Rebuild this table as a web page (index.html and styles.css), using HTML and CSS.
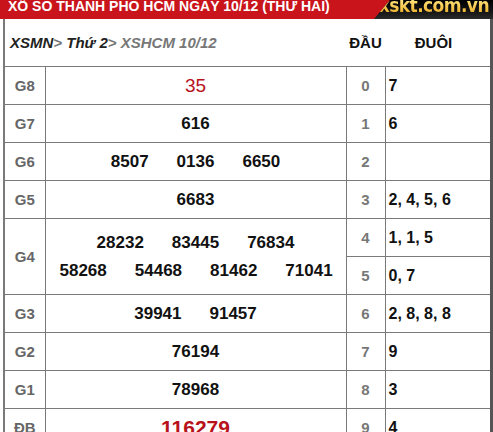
FILE: index.html
```html
<!DOCTYPE html>
<html lang="vi">
<head>
<meta charset="utf-8">
<title>XSHCM 10/12</title>
<link rel="stylesheet" href="styles.css">
</head>
<body>
<div class="topbar">
  <div class="title">XỔ SỐ THÀNH PHỐ HCM NGÀY 10/12 (THỨ HAI)</div>
  <div class="logo"><span class="logo-text">xskt.com.vn</span></div>
</div>
<div class="board">
  <table class="results">
    <colgroup>
      <col class="c-label"><col class="c-nums"><col class="c-head"><col class="c-tail">
    </colgroup>
    <thead>
      <tr>
        <th colspan="2" class="crumbs"><span class="dark">XSMN</span><span class="sep">&gt; </span><span class="dark">Thứ 2</span><span class="sep">&gt; XSHCM 10/12</span></th>
        <th class="h-head">ĐẦU</th>
        <th class="h-tail">ĐUÔI</th>
      </tr>
    </thead>
    <tbody>
      <tr><td class="label">G8</td><td class="nums"><span class="g8">35</span></td><td class="head">0</td><td class="tail">7</td></tr>
      <tr><td class="label">G7</td><td class="nums"><span class="n">616</span></td><td class="head">1</td><td class="tail">6</td></tr>
      <tr><td class="label">G6</td><td class="nums"><span class="n">8507</span><span class="n">0136</span><span class="n">6650</span></td><td class="head">2</td><td class="tail"></td></tr>
      <tr><td class="label">G5</td><td class="nums"><span class="n">6683</span></td><td class="head">3</td><td class="tail">2, 4, 5, 6</td></tr>
      <tr><td class="label" rowspan="2">G4</td><td class="nums multi" rowspan="2"><div><span class="n">28232</span><span class="n">83445</span><span class="n">76834</span></div><div><span class="n">58268</span><span class="n">54468</span><span class="n">81462</span><span class="n">71041</span></div></td><td class="head">4</td><td class="tail">1, 1, 5</td></tr>
      <tr><td class="head">5</td><td class="tail">0, 7</td></tr>
      <tr><td class="label">G3</td><td class="nums"><span class="n">39941</span><span class="n">91457</span></td><td class="head">6</td><td class="tail">2, 8, 8, 8</td></tr>
      <tr><td class="label">G2</td><td class="nums"><span class="n">76194</span></td><td class="head">7</td><td class="tail">9</td></tr>
      <tr><td class="label">G1</td><td class="nums"><span class="n">78968</span></td><td class="head">8</td><td class="tail">3</td></tr>
      <tr><td class="label">ĐB</td><td class="nums"><span class="db">116279</span></td><td class="head">9</td><td class="tail">4</td></tr>
    </tbody>
  </table>
</div>
</body>
</html>
```
FILE: styles.css
```css
html, body {
  margin: 0;
  padding: 0;
  background: #fff;
}
body {
  font-family: "Liberation Sans", Arial, sans-serif;
  width: 493px;
  overflow: hidden;
}
.topbar {
  height: 19px;
  background: #c9141c;
  display: flex;
  justify-content: space-between;
  overflow: hidden;
}
.title {
  color: #fff;
  font-weight: bold;
  font-size: 14px;
  line-height: 13px;
  padding-left: 8px;
  white-space: nowrap;
}
.logo {
  width: 125px;
  height: 19px;
  background: linear-gradient(180deg, #000 0%, #151515 60%, #2a2a2a 100%);
  clip-path: polygon(22px 0, 100% 0, 100% 100%, 6px 100%);
  display: flex;
  justify-content: flex-end;
  overflow: hidden;
}
.logo-text {
  font-family: "DejaVu Sans Condensed", "DejaVu Sans", sans-serif;
  font-stretch: condensed;
  font-weight: bold;
  font-size: 19px;
  line-height: 11px;
  padding-right: 4px;
  color: #e8b640;
  background: linear-gradient(180deg, #ffe27a 0%, #f0bb3c 55%, #a8741e 100%);
  -webkit-background-clip: text;
  background-clip: text;
  -webkit-text-fill-color: transparent;
  letter-spacing: -0.6px;
}
.board {
  margin-left: 3px;
  width: 485px;
  border-left: 2px solid #7a7a7a;
  border-right: 3px solid #555;
}
.results {
  width: 485px;
  table-layout: fixed;
  border-collapse: collapse;
}
.c-label { width: 40px; }
.c-nums { width: 301px; }
.c-head { width: 39px; }
.c-tail { width: 105px; }
.results th {
  height: 47px;
  padding: 0;
  font-size: 15px;
  font-weight: bold;
  color: #111;
  border-bottom: 1px solid #7a7a7a;
}
.crumbs {
  text-align: left;
  padding-left: 5px !important;
  font-style: italic;
  white-space: nowrap;
}
.dark { color: #222; }
.sep { color: #777; }
.h-head { text-align: center; }
.h-tail { text-align: center; padding-right: 8px !important; }
.results td {
  height: 37px;
  padding: 0;
  border: 1px solid #7a7a7a;
  text-align: center;
  vertical-align: middle;
  font-weight: bold;
}
.results tr > td:first-child { border-left: none; }
.results tr > td:last-child { border-right: none; }
.label {
  color: #666;
  font-size: 15px;
}
.nums {
  font-size: 17px;
  color: #111;
  white-space: nowrap;
}
.n {
  display: inline-block;
  margin: 0 14px;
}
.multi {
  line-height: 28px;
}
.g8 {
  color: #b8121b;
  font-weight: normal;
  font-size: 19px;
}
.db {
  color: #b8121b;
  font-size: 21px;
}
.head {
  color: #777;
  font-size: 15px;
}
.results td.tail {
  text-align: left;
  padding-left: 3px;
  color: #111;
  font-size: 16px;
}
```
